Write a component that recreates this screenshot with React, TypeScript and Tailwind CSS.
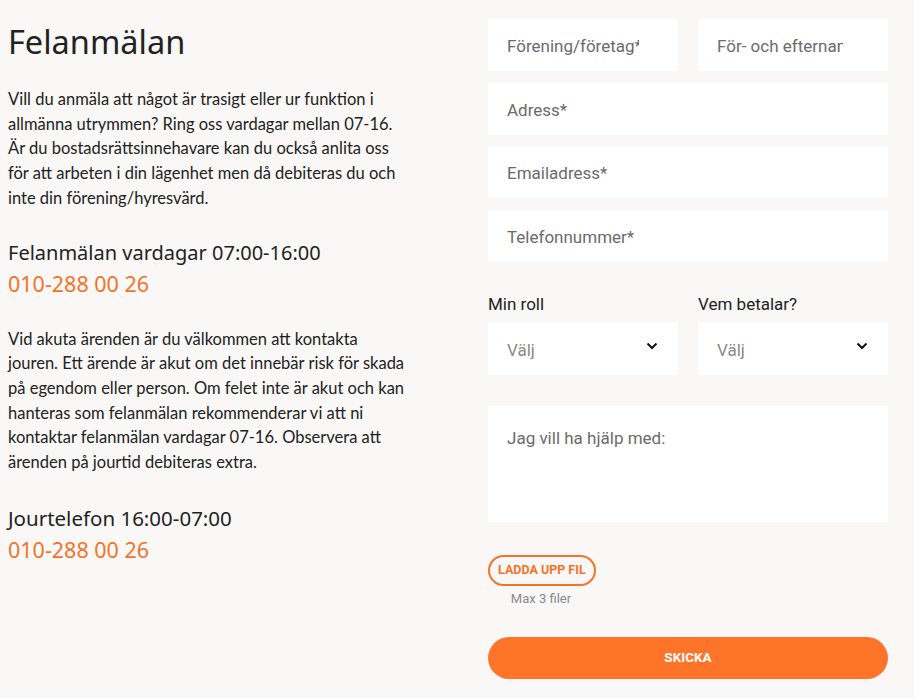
import React from "react";

const body = { fontFamily: "Lato, 'Open Sans', sans-serif" };
const head = { fontFamily: "'Noto Sans', Roboto, sans-serif" };
const form = { fontFamily: "Roboto, 'Noto Sans', sans-serif" };

function Input({ ph, className = "", pr = "pr-[19px]" }: { ph: string; className?: string; pr?: string }) {
  return (
    <div className={`bg-white h-[52px] flex items-center pl-[19px] ${pr} pt-[4px] overflow-hidden ${className}`}>
      <span className="block text-[17px] text-[#6b6b6b] whitespace-nowrap overflow-hidden">{ph}</span>
    </div>
  );
}

function Select({ label }: { label: string }) {
  return (
    <div className="flex flex-col w-[190px]">
      <div className="text-[17px] text-[#222] h-[32px] flex items-center">{label}</div>
      <div className="bg-white h-[53px] flex items-center justify-between pl-[19px] pr-[20px] mt-[1px]">
        <span className="text-[17px] text-[#8a8a8a] mt-[4px]">Välj</span>
        <svg width="12" height="8" viewBox="0 0 12 8" className="mb-[6px]">
          <path d="M1.5 1.5 L6 6 L10.5 1.5" fill="none" stroke="#111" strokeWidth="2" />
        </svg>
      </div>
    </div>
  );
}

export default function App() {
  return (
    <div className="w-[914px] h-[698px] bg-[#f9f8f6] flex overflow-hidden">
      <div className="w-[488px] pl-[8px] pt-[18px] text-[#222]">
        <h1 className="text-[32.5px] leading-[48px] text-[#222]" style={head}>Felanmälan</h1>
        <p className="mt-[21px] text-[16.5px] leading-[24.7px] text-[#222]" style={body}>
          Vill du anmäla att något är trasigt eller ur funktion i<br />
          allmänna utrymmen? Ring oss vardagar mellan 07-16.<br />
          Är du bostadsrättsinnehavare kan du också anlita oss<br />
          för att arbeten i din lägenhet men då debiteras du och<br />
          inte din förening/hyresvärd.
        </p>
        <div className="mt-[26px] text-[20px] leading-[31px]" style={head}>Felanmälan vardagar 07:00-16:00</div>
        <div className="text-[21.5px] leading-[31px] text-[#f57329]" style={head}>010-288 00 26</div>
        <p className="mt-[28px] text-[16.5px] leading-[24.7px] text-[#222]" style={body}>
          Vid akuta ärenden är du välkommen att kontakta<br />
          jouren. Ett ärende är akut om det innebär risk för skada<br />
          på egendom eller person. Om felet inte är akut och kan<br />
          hanteras som felanmälan rekommenderar vi att ni<br />
          kontaktar felanmälan vardagar 07-16. Observera att<br />
          ärenden på jourtid debiteras extra.
        </p>
        <div className="mt-[28px] text-[20.5px] leading-[31px]" style={head}>Jourtelefon 16:00-07:00</div>
        <div className="text-[21.5px] leading-[31px] text-[#f57329]" style={head}>010-288 00 26</div>
      </div>
      <div className="w-[400px] pt-[19px] flex flex-col" style={form}>
        <div className="flex gap-[20px]">
          <Input ph="Förening/företag*" className="w-[190px] shrink-0" pr="pr-[39px]" />
          <Input ph="För- och efternamn*" className="w-[190px] shrink-0" pr="pr-[45px]" />
        </div>
        <Input ph="Adress*" className="mt-[12px]" />
        <Input ph="Emailadress*" className="mt-[11px]" />
        <Input ph="Telefonnummer*" className="mt-[12px]" />
        <div className="flex gap-[20px] mt-[27px]">
          <Select label="Min roll" />
          <Select label="Vem betalar?" />
        </div>
        <div className="bg-white h-[116px] mt-[31px] pl-[19px] pt-[20px]">
          <span className="text-[17px] text-[#6b6b6b]">Jag vill ha hjälp med:</span>
        </div>
        <div className="mt-[33px] flex flex-col items-start">
          <div className="h-[31px] px-[8px] rounded-full border-2 border-[#f57329] flex items-center text-[#f57329] text-[12.5px] font-bold">
            LADDA UPP FIL
          </div>
          <div className="w-[106px] text-center text-[13px] text-[#8a8a8a] mt-[3px]">Max 3 filer</div>
        </div>
        <div className="mt-[28px] h-[42px] rounded-full bg-[#fe7429] flex items-center justify-center text-white text-[13.5px] font-bold">
          SKICKA
        </div>
      </div>
    </div>
  );
}
